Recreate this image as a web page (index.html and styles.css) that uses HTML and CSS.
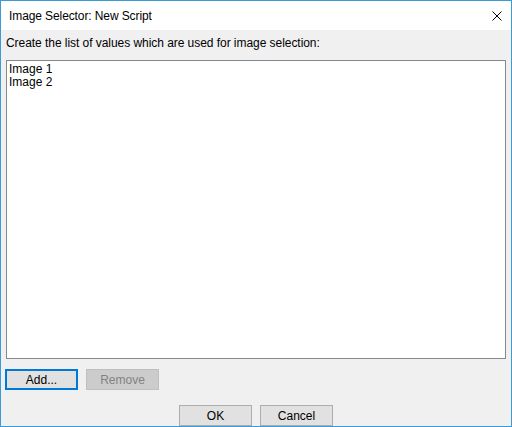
FILE: index.html
```html
<!DOCTYPE html>
<html lang="en">
<head>
    <meta charset="UTF-8">
    <title>Image Selector: New Script</title>
    <link rel="stylesheet" href="styles.css">
</head>
<body>
    <div class="window">
        <div class="titlebar">
            <span class="title">Image Selector: New Script</span>
            <button class="close" title="Close">
                <svg width="10" height="10" viewBox="0 0 10 10">
                    <path d="M0.5 0.5 L9.5 9.5 M9.5 0.5 L0.5 9.5" stroke="#000" stroke-width="1" fill="none"/>
                </svg>
            </button>
        </div>
        <div class="client">
            <div class="prompt">Create the list of values which are used for image selection:</div>
            <div class="listbox">
                <div class="item">Image 1</div>
                <div class="item">Image 2</div>
            </div>
            <div class="list-actions">
                <button class="btn focused">Add...</button>
                <button class="btn" disabled>Remove</button>
            </div>
            <div class="dialog-actions">
                <button class="btn">OK</button>
                <button class="btn">Cancel</button>
            </div>
        </div>
    </div>
</body>
</html>
```

FILE: styles.css
```css
body {
    margin: 0;
    font-family: "Liberation Sans", Arial, sans-serif;
    font-size: 12px;
    color: #000;
    background: #fff;
}

.window {
    width: 512px;
    height: 427px;
    box-sizing: border-box;
    border: 1px solid #3c9ad6;
    display: flex;
    flex-direction: column;
    background: #f0f0f0;
}

.titlebar {
    height: 29px;
    background: #fff;
    display: flex;
    align-items: center;
    justify-content: space-between;
    padding-left: 8px;
    flex-shrink: 0;
}

.title {
    font-size: 12px;
    letter-spacing: -0.1px;
}

.close {
    border: none;
    background: transparent;
    padding: 0;
    width: 46px;
    height: 29px;
    display: flex;
    align-items: center;
    justify-content: center;
}

.close svg {
    display: block;
    margin-left: 18px;
}

.client {
    flex: 1;
    display: flex;
    flex-direction: column;
    padding: 6px 5px 0 5px;
}

.prompt {
    line-height: 15px;
    letter-spacing: -0.05px;
}

.listbox {
    margin-top: 9px;
    height: 299px;
    box-sizing: border-box;
    border: 1px solid #828790;
    background: #fff;
    padding: 2px 2px;
}

.item {
    line-height: 13px;
}

.list-actions {
    display: flex;
    gap: 8px;
    margin-top: 10px;
    margin-left: -1px;
}

.dialog-actions {
    display: flex;
    justify-content: center;
    gap: 8px;
    margin-top: 15px;
}

.btn {
    width: 73px;
    height: 21px;
    box-sizing: border-box;
    border: 1px solid #adadad;
    background: #e1e1e1;
    font-family: inherit;
    font-size: 12px;
    color: #000;
    padding: 0;
}

.btn.focused {
    border: 2px solid #0078d7;
}

.btn:disabled {
    background: #cccccc;
    border-color: #bfbfbf;
    color: #838383;
}
```
